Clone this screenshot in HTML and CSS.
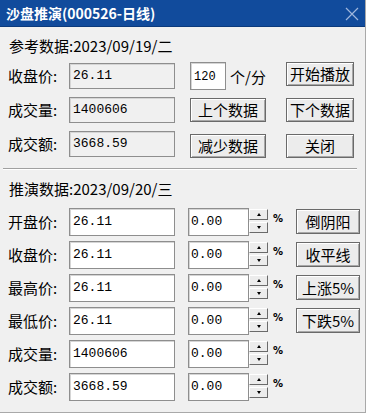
FILE: index.html
```html
<!DOCTYPE html>
<html lang="zh-CN">
<head>
    <meta charset="UTF-8">
    <title>沙盘推演</title>
    <link rel="stylesheet" href="styles.css">
</head>
<body>
    <div class="window">
        <div class="titlebar">
            <span class="title">沙盘推演(000526-日线)</span>
            <svg class="close" width="14" height="14" viewBox="0 0 14 14">
                <path d="M1 1 L13 13 M13 1 L1 13" stroke="#9fb6dc" stroke-width="1.2" fill="none"/>
            </svg>
        </div>

        <div class="section upper">
            <div class="heading">参考数据:2023/09/19/二</div>

            <div class="row">
                <span class="label">收盘价:</span>
                <div class="field readonly">26.11</div>
                <div class="col3 speed">
                    <div class="field small">120</div>
                    <span class="unit">个/分</span>
                </div>
                <button class="btn col4 top">开始播放</button>
            </div>
            <div class="row">
                <span class="label">成交量:</span>
                <div class="field readonly">1400606</div>
                <button class="btn col3">上个数据</button>
                <button class="btn col4">下个数据</button>
            </div>
            <div class="row">
                <span class="label">成交额:</span>
                <div class="field readonly">3668.59</div>
                <button class="btn col3 low">减少数据</button>
                <button class="btn col4 low">关闭</button>
            </div>
        </div>

        <div class="divider"></div>

        <div class="section lower">
            <div class="heading">推演数据:2023/09/20/三</div>

            <div class="row tall">
                <span class="label">开盘价:</span>
                <div class="field">26.11</div>
                <div class="spin"><div class="spin-text">0.00</div><div class="spin-btns"><span class="up"></span><span class="down"></span></div></div>
                <span class="pct">%</span>
                <button class="btn side">倒阴阳</button>
            </div>
            <div class="row tall">
                <span class="label">收盘价:</span>
                <div class="field">26.11</div>
                <div class="spin"><div class="spin-text">0.00</div><div class="spin-btns"><span class="up"></span><span class="down"></span></div></div>
                <span class="pct">%</span>
                <button class="btn side">收平线</button>
            </div>
            <div class="row tall">
                <span class="label">最高价:</span>
                <div class="field">26.11</div>
                <div class="spin"><div class="spin-text">0.00</div><div class="spin-btns"><span class="up"></span><span class="down"></span></div></div>
                <span class="pct">%</span>
                <button class="btn side">上涨5%</button>
            </div>
            <div class="row tall">
                <span class="label">最低价:</span>
                <div class="field">26.11</div>
                <div class="spin"><div class="spin-text">0.00</div><div class="spin-btns"><span class="up"></span><span class="down"></span></div></div>
                <span class="pct">%</span>
                <button class="btn side">下跌5%</button>
            </div>
            <div class="row tall">
                <span class="label">成交量:</span>
                <div class="field">1400606</div>
                <div class="spin"><div class="spin-text">0.00</div><div class="spin-btns"><span class="up"></span><span class="down"></span></div></div>
                <span class="pct">%</span>
            </div>
            <div class="row tall">
                <span class="label">成交额:</span>
                <div class="field">3668.59</div>
                <div class="spin"><div class="spin-text">0.00</div><div class="spin-btns"><span class="up"></span><span class="down"></span></div></div>
                <span class="pct">%</span>
            </div>
        </div>
    </div>
</body>
</html>
```

FILE: styles.css
```css
body {
    margin: 0;
    background: #fff;
    font-family: "Noto Sans CJK SC", "Noto Sans", sans-serif;
    color: #000;
}

.window {
    width: 366px;
    height: 413px;
    background: #f0f0f0;
    border-right: 1px solid #a9a9a9;
    border-bottom: 1px solid #a9a9a9;
    box-sizing: border-box;
    overflow: hidden;
}

.titlebar {
    height: 27px;
    background: #114b9c;
    border-bottom: 1px solid #0b3a7c;
    box-sizing: border-box;
    display: flex;
    align-items: center;
    justify-content: space-between;
    padding: 0 6px 0 6px;
}

.title {
    color: #fff;
    font-weight: bold;
    font-size: 14px;
    line-height: 18px;
}

.close {
    margin-top: 1px;
}

.section {
    padding-left: 8px;
}

.upper {
    padding-top: 10px;
}

.heading {
    font-size: 15px;
    line-height: 18px;
    height: 18px;
    margin-bottom: 7px;
    padding-left: 1px;
}

.lower .heading {
    margin-bottom: 10px;
}

.row {
    display: flex;
    align-items: center;
    height: 28px;
    margin-bottom: 6px;
}

.row.tall {
    margin-bottom: 5px;
    align-items: flex-start;
}

.label {
    width: 61px;
    font-size: 15px;
    line-height: 28px;
}

.field {
    width: 106px;
    height: 26px;
    box-sizing: border-box;
    border: 1px solid #8e8e8e;
    box-shadow: inset 1px 1px 0 #d5d5d5;
    background: #fff;
    font-family: "Liberation Mono", monospace;
    font-size: 13px;
    line-height: 16px;
    padding: 4px 0 0 3px;
}

.tall .field {
    height: 28px;
    padding-top: 5px;
}

.field.readonly {
    background: #f0f0f0;
}

.field.small {
    width: 42px;
    height: 28px;
    font-size: 12px;
    padding-top: 6px;
}

.col3 {
    margin-left: 15px;
    width: 76px;
}

.col4 {
    margin-left: 20px;
    width: 68px;
}

.speed {
    display: flex;
    align-items: center;
}

.unit {
    font-size: 15px;
    margin-left: 4px;
    white-space: nowrap;
}

.btn {
    height: 24px;
    box-sizing: border-box;
    border: 1px solid #6a6a6a;
    background: #ececec;
    box-shadow: inset 1px 1px 0 #fff, inset -1px -1px 0 #a8a8a8;
    font-family: "Noto Sans CJK SC", "Noto Sans", sans-serif;
    font-size: 15px;
    line-height: 20px;
    padding: 0;
    color: #000;
}

.btn.top {
    align-self: flex-start;
}

.btn.low {
    margin-top: 4px;
}

.side {
    margin-left: 0;
    width: 64px;
    height: 25px;
    margin-top: 1px;
}

.spin {
    margin-left: 13px;
    display: flex;
    height: 28px;
}

.spin-text {
    width: 61px;
    height: 28px;
    box-sizing: border-box;
    border: 1px solid #8e8e8e;
    box-shadow: inset 1px 1px 0 #d5d5d5;
    background: #fff;
    font-family: "Liberation Mono", monospace;
    font-size: 13px;
    line-height: 16px;
    padding: 5px 0 0 2px;
}

.spin-btns {
    width: 19px;
    display: flex;
    flex-direction: column;
    gap: 2px;
    padding-top: 1px;
}

.spin-btns span {
    display: block;
    height: 11px;
    box-sizing: border-box;
    background: #ececec;
    border-top: 1px solid #fff;
    border-left: 1px solid #fff;
    border-right: 1px solid #6a6a6a;
    border-bottom: 1px solid #6a6a6a;
    position: relative;
}

.spin-btns span::after {
    content: "";
    position: absolute;
    left: 7px;
    top: 3px;
    border-left: 2px solid transparent;
    border-right: 2px solid transparent;
}

.spin-btns .up::after {
    border-bottom: 3px solid #000;
}

.spin-btns .down::after {
    border-top: 3px solid #000;
}

.pct {
    width: 28px;
    font-family: "DejaVu Sans", sans-serif;
    font-weight: bold;
    font-size: 10px;
    line-height: 10px;
    padding-left: 5px;
    box-sizing: border-box;
    margin-top: 6px;
}

.divider {
    margin: 10px 8px 0 3px;
    height: 0;
    border-top: 1px solid #a0a0a0;
    border-bottom: 1px solid #fff;
}

.lower {
    padding-top: 10px;
}
```
